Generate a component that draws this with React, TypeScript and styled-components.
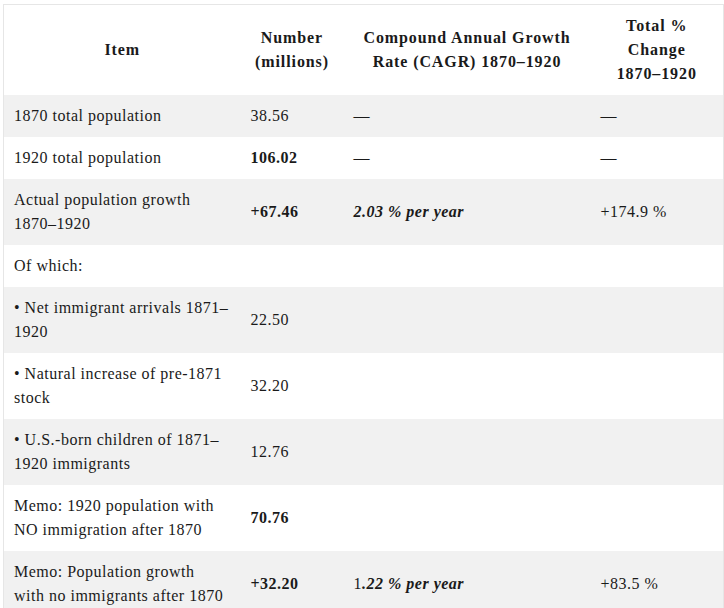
import React from "react";
import styled, { createGlobalStyle } from "styled-components";

const GlobalStyle = createGlobalStyle`
  html, body {
    margin: 0;
    padding: 0;
    background: #fff;
  }
  body {
    font-family: "Liberation Serif", "DejaVu Serif", Georgia, serif;
    color: #1a1a1a;
  }
`;

const Page = styled.div`
  padding: 4px 0 0 3px;
`;

const Table = styled.table`
  width: 721px;
  table-layout: fixed;
  border-collapse: collapse;
  border: 1px solid #e6e6e6;
  font-size: 16px;
  line-height: 24px;
  letter-spacing: 0.5px;
`;

const HeadCell = styled.th`
  padding: 9px 8px;
  font-weight: bold;
  text-align: center;
  vertical-align: middle;
  background: #fff;
  letter-spacing: 0.9px;
  white-space: nowrap;
`;

const BodyRow = styled.tr<{ $shaded: boolean }>`
  background: ${(p) => (p.$shaded ? "#f1f1f1" : "#fff")};
`;

const Cell = styled.td<{ $bold?: boolean }>`
  padding: 9px 10px;
  text-align: left;
  vertical-align: middle;
  white-space: nowrap;
  font-weight: ${(p) => (p.$bold ? "bold" : "normal")};
`;

const Rate = styled.em`
  font-weight: bold;
  font-style: italic;
`;

const Lines = ({ text }: { text: string }) => (
  <>
    {text.split("\n").map((line, i) => (
      <React.Fragment key={i}>
        {i > 0 && <br />}
        {line}
      </React.Fragment>
    ))}
  </>
);

type Row = {
  item: string;
  number: string;
  boldNumber?: boolean;
  cagr?: React.ReactNode;
  total?: string;
  shaded: boolean;
};

const rows: Row[] = [
  { item: "1870 total population", number: "38.56", cagr: "—", total: "—", shaded: true },
  { item: "1920 total population", number: "106.02", boldNumber: true, cagr: "—", total: "—", shaded: false },
  {
    item: "Actual population growth\n1870–1920",
    number: "+67.46",
    boldNumber: true,
    cagr: <Rate>2.03 % per year</Rate>,
    total: "+174.9 %",
    shaded: true,
  },
  { item: "Of which:", number: "", shaded: false },
  { item: "• Net immigrant arrivals 1871–\n1920", number: "22.50", shaded: true },
  { item: "• Natural increase of pre-1871\nstock", number: "32.20", shaded: false },
  { item: "• U.S.-born children of 1871–\n1920 immigrants", number: "12.76", shaded: true },
  { item: "Memo: 1920 population with\nNO immigration after 1870", number: "70.76", boldNumber: true, shaded: false },
  {
    item: "Memo: Population growth\nwith no immigrants after 1870",
    number: "+32.20",
    boldNumber: true,
    cagr: (
      <>
        1<Rate>.22 % per year</Rate>
      </>
    ),
    total: "+83.5 %",
    shaded: true,
  },
];

const headers = [
  "Item",
  "Number\n(millions)",
  "Compound Annual Growth\nRate (CAGR) 1870–1920",
  "Total %\nChange\n1870–1920",
];

const App = () => {
  return (
    <Page>
      <GlobalStyle />
      <Table>
        <colgroup>
          <col style={{ width: 237 }} />
          <col style={{ width: 103 }} />
          <col style={{ width: 247 }} />
          <col style={{ width: 133 }} />
        </colgroup>
        <thead>
          <tr>
            {headers.map((h) => (
              <HeadCell key={h}>
                <Lines text={h} />
              </HeadCell>
            ))}
          </tr>
        </thead>
        <tbody>
          {rows.map((row) => (
            <BodyRow key={row.item} $shaded={row.shaded}>
              <Cell>
                <Lines text={row.item} />
              </Cell>
              <Cell $bold={row.boldNumber}>{row.number}</Cell>
              <Cell>{row.cagr}</Cell>
              <Cell>{row.total}</Cell>
            </BodyRow>
          ))}
        </tbody>
      </Table>
    </Page>
  );
};

export default App;
